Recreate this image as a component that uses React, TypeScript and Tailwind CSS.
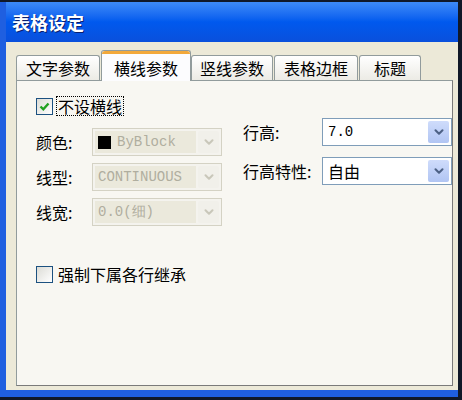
import { ChevronDown } from "lucide-react"

const cjk = "font-['SimSun','Noto_Sans_CJK_SC',sans-serif]"

const tabs = [
  { name: "文字参数", w: "w-[84px]" },
  { name: "横线参数", w: "w-[90px]", active: true },
  { name: "竖线参数", w: "w-[82px]" },
  { name: "表格边框", w: "w-[84px]" },
  { name: "标题", w: "w-[62px]" },
]

function Combo({ value, disabled, swatch, mono }: { value: string; disabled?: boolean; swatch?: boolean; mono?: boolean }) {
  return (
    <div
      className={
        "flex h-[28px] w-[130px] items-stretch border p-[2px] " +
        (disabled ? "border-[#d4d2c4] bg-[#f4f3ee]" : "border-[#7f9db9] bg-white")
      }
    >
      <div
        className={
          "flex flex-1 items-center gap-[6px] px-[3px] " +
          (disabled ? "bg-[#ebe9dc] text-[#b0ae9f]" : "text-black") +
          (mono ? " font-['Liberation_Mono',monospace] text-[14px]" : " text-[16px] " + cjk)
        }
      >
        {swatch && <span className="h-[13px] w-[13px] bg-black" />}
        <span>{value}</span>
      </div>
      <div
        className={
          "ml-[2px] flex w-[21px] items-center justify-center rounded-[2px] " +
          (disabled ? "bg-[#f1f0ea] text-[#c9c7ba]" : "bg-gradient-to-b from-[#cfdcfb] to-[#b1c5f3] text-[#4d6185]")
        }
      >
        <ChevronDown size={14} strokeWidth={3.5} />
      </div>
    </div>
  )
}

function Check({ checked }: { checked?: boolean }) {
  return (
    <span className="flex h-[17px] w-[17px] items-center justify-center border border-[#1c5180] bg-gradient-to-br from-[#dcdcd6] to-white">
      {checked && (
        <svg width="11" height="11" viewBox="0 0 11 11">
          <path d="M1.5 5.5 L4.3 8.3 L9.5 2.5" fill="none" stroke="#21a121" strokeWidth="2.4" />
        </svg>
      )}
    </span>
  )
}

function Label({ text, w }: { text: string; w: string }) {
  return <span className={"text-[16px] text-black " + w + " " + cjk}>{text}</span>
}

export default function App() {
  return (
    <div className="h-[400px] w-[462px] border-t-2 border-r-4 border-b-[3px] border-[#101828] bg-[#0b4fd8]">
      <div className="flex h-full flex-col border-l-[6px] border-b-[7px] border-[#1f5fe0]">
        {/* Title bar */}
        <div className="flex h-[40px] items-center bg-gradient-to-b from-[#3d8af7] via-[#0059ee] to-[#0a50dc] pl-[6px]">
          <span className={"text-[18px] font-bold text-white [text-shadow:1px_1px_0_#0a1f6e] " + cjk}>表格设定</span>
        </div>

        {/* Body */}
        <div className="flex flex-1 flex-col bg-[#ece9d8] pl-[10px] pr-[5px] pb-[4px] pt-[8px]">
          {/* Tabs */}
          <div className="flex h-[30px] items-end">
            {tabs.map((t) =>
              t.active ? (
                <div
                  key={t.name}
                  className={"relative z-10 -mb-px flex h-[31px] flex-col rounded-t-[3px] border border-b-0 border-[#919b9c] bg-[#fcfcfe] " + t.w}
                >
                  <div className="h-[3px] rounded-t-[3px] bg-[#f2a83a]" />
                  <span className={"flex flex-1 items-center justify-center text-[16px] text-black " + cjk}>{t.name}</span>
                </div>
              ) : (
                <div
                  key={t.name}
                  className={
                    "mr-[1px] flex h-[25px] items-center justify-center rounded-t-[3px] border border-b-0 border-[#919b9c] bg-gradient-to-b from-white to-[#ecebe5] text-[16px] text-black " +
                    t.w +
                    " " +
                    cjk
                  }
                >
                  {t.name}
                </div>
              ),
            )}
          </div>

          {/* Panel */}
          <div className="flex flex-1 flex-col border border-[#919b9c] border-r-[#7a7a7a] border-b-[#7a7a7a] bg-[#f8f7f2] pl-[19px] pt-[14px]">
            <div className="flex">
              {/* Left column */}
              <div className="flex w-[186px] flex-col">
                <div className="flex h-[22px] items-center gap-[3px]">
                  <Check checked />
                  <span className={"border border-dotted border-black px-[1px] text-[16px] leading-[18px] text-black " + cjk}>不设横线</span>
                </div>
                <div className="mt-[11px] flex flex-col gap-[7px]">
                  <div className="flex items-center">
                    <Label text="颜色:" w="w-[56px]" />
                    <Combo value="ByBlock" disabled swatch mono />
                  </div>
                  <div className="flex items-center">
                    <Label text="线型:" w="w-[56px]" />
                    <Combo value="CONTINUOUS" disabled mono />
                  </div>
                  <div className="flex items-center">
                    <Label text="线宽:" w="w-[56px]" />
                    <Combo value="0.0(细)" disabled mono />
                  </div>
                </div>
              </div>

              {/* Right column */}
              <div className="ml-[21px] flex flex-col gap-[11px] pt-[23px]">
                <div className="flex items-center">
                  <Label text="行高:" w="w-[79px]" />
                  <Combo value="7.0" mono />
                </div>
                <div className="flex items-center">
                  <Label text="行高特性:" w="w-[79px]" />
                  <Combo value="自由" />
                </div>
              </div>
            </div>

            <div className="mt-[38px] flex h-[20px] items-center gap-[5px]">
              <Check />
              <span className={"text-[16px] text-black " + cjk}>强制下属各行继承</span>
            </div>
          </div>
        </div>
      </div>
    </div>
  )
}
